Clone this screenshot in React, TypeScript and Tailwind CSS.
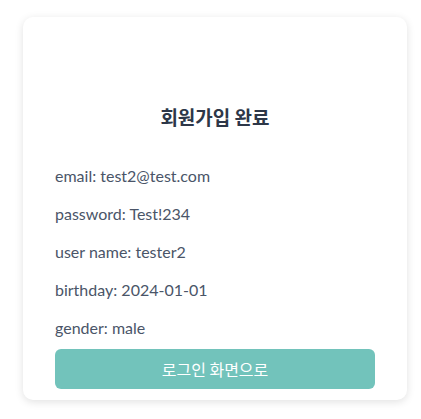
export default function App() {
  const rows = [
    "email: test2@test.com",
    "password: Test!234",
    "user name: tester2",
    "birthday: 2024-01-01",
    "gender: male",
  ];
  return (
    <div className="min-h-[419px] w-[421px] bg-white pt-[17px] pl-[23px]" style={{ fontFamily: 'Lato, "Noto Sans CJK KR", sans-serif' }}>
      <div className="flex w-[384px] flex-col rounded-[10px] bg-white px-8 pt-[86px] pb-[11px] shadow-[0_2px_8px_rgba(0,0,0,0.12)]">
        <h1 className="text-center text-[19px] font-bold leading-7 text-[#2d3748]" style={{ fontFamily: '"Noto Sans CJK KR", sans-serif' }}>
          회원가입 완료
        </h1>
        <div className="mt-[33px] flex flex-col gap-[14px]">
          {rows.map((r) => (
            <p key={r} className="text-[16px] leading-6 text-[#4a5568]">
              {r}
            </p>
          ))}
        </div>
        <button className="mt-[9px] h-10 w-full rounded-[6px] bg-[#72c3bb] text-[16px] text-white" style={{ fontFamily: '"Noto Sans CJK KR", sans-serif' }}>
          로그인 화면으로
        </button>
      </div>
    </div>
  );
}
